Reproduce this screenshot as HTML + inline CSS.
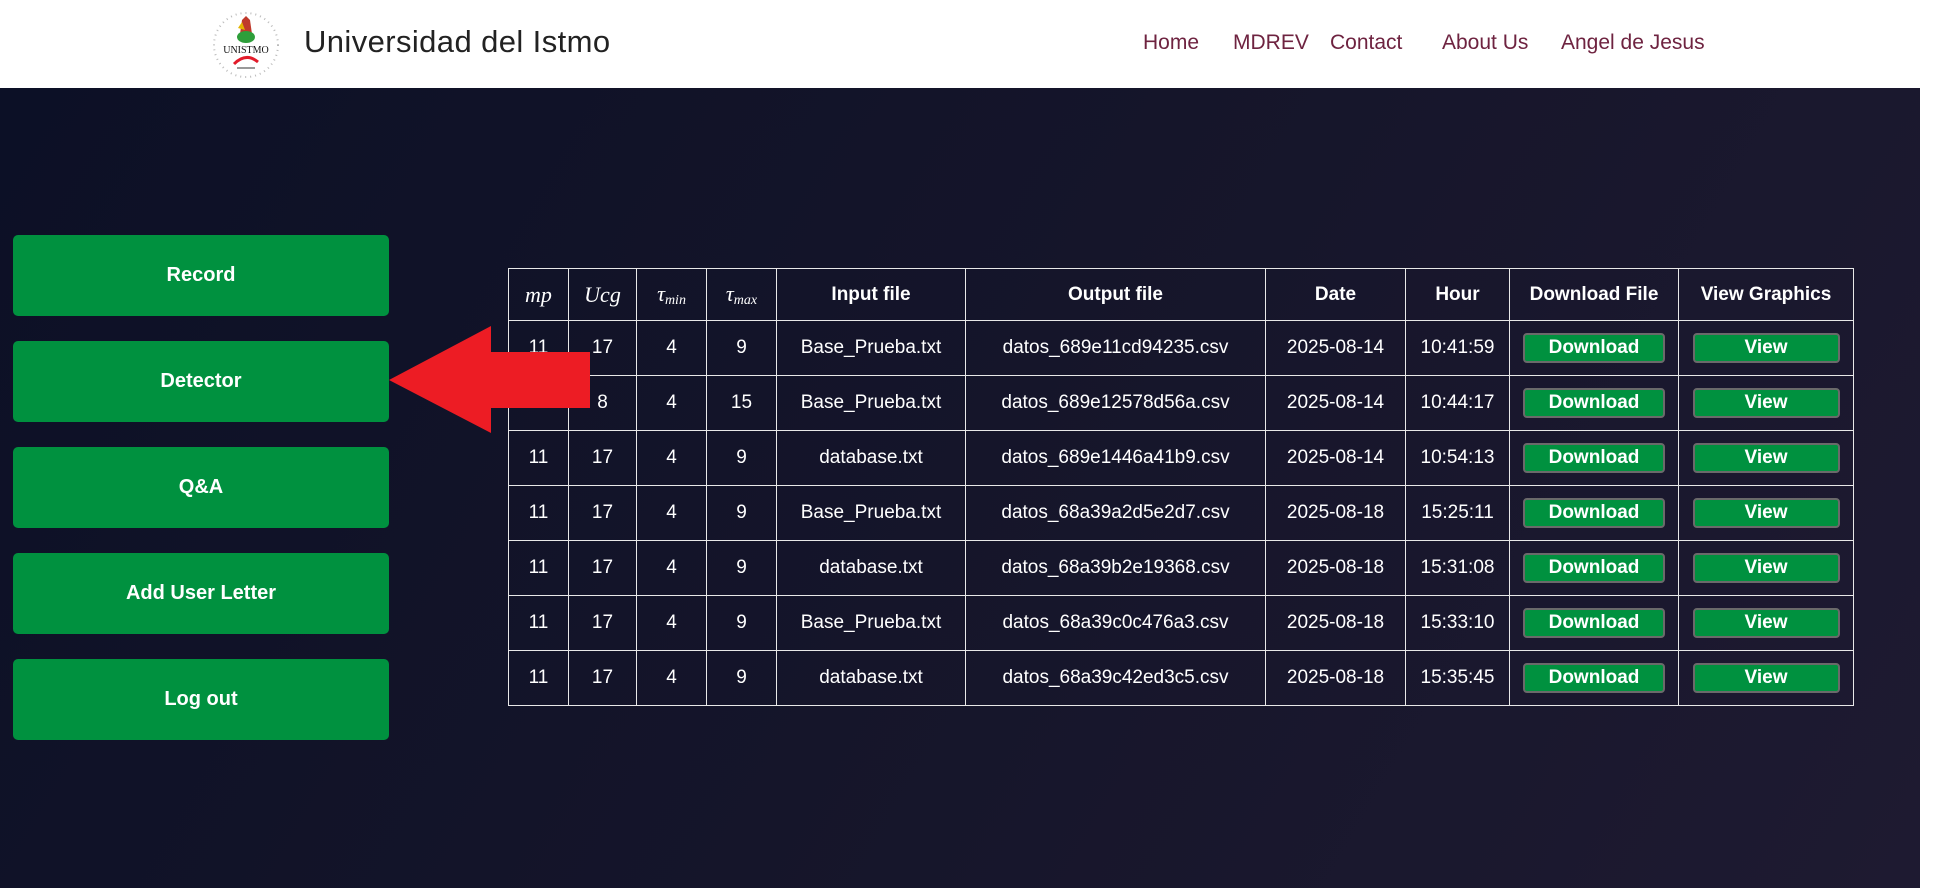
<!DOCTYPE html>
<html><head><meta charset="utf-8"><style>
*{margin:0;padding:0;box-sizing:border-box}
html,body{width:1957px;height:888px;overflow:hidden;background:#fff;font-family:"Liberation Sans",sans-serif}
#hdr{position:absolute;left:0;top:0;width:1920px;height:88px;background:#fff}
#main{position:absolute;left:0;top:88px;width:1920px;height:800px;background:linear-gradient(120deg,#0c1026 0%,#15152a 50%,#1e1a31 100%)}
.title{position:absolute;left:304px;top:24px;font-size:31px;color:#222;letter-spacing:0.4px}
.nav a{position:absolute;top:31px;font-size:21px;color:#6e2340;text-decoration:none}
.sb{position:absolute;left:13px;width:376px;height:81px;background:#00913f;border-radius:5px;color:#fff;font-weight:bold;font-size:20px;display:flex;align-items:center;justify-content:center}
table{position:absolute;left:508px;top:268px;border-collapse:collapse;color:#fff;font-size:19px;table-layout:fixed;width:1345px}
td,th{border:1px solid #e8e8e8;text-align:center;height:55px;padding:0;white-space:nowrap}
th{height:52px;font-size:19px}
.m{font-family:"Liberation Serif",serif;font-style:italic;font-weight:normal;font-size:22px}
.m sub{font-size:14px;vertical-align:-3px}
.b{display:inline-block;background:#00913f;border:2px solid #6a6a6a;border-radius:4px;color:#fff;font-weight:bold;font-size:19px;height:30px;line-height:26px}
.d{width:142px}.v{width:147px}
</style></head><body>
<div id="hdr">
<svg style="position:absolute;left:210px;top:10px" width="72" height="70" viewBox="0 0 72 70">
<circle cx="36" cy="35" r="32" fill="none" stroke="#bbb" stroke-dasharray="1 4" stroke-width="2"/>
<path d="M32 10 L36 6 L40 10 L42 24 L30 24Z" fill="#c0392b"/>
<ellipse cx="36" cy="27" rx="9" ry="6" fill="#2e9e3a"/>
<path d="M28 18 L32 12 L35 20Z" fill="#e4b400"/>
<text x="36" y="43" font-family="Liberation Serif" font-size="10" text-anchor="middle" fill="#111">UNISTMO</text>
<path d="M24 54 Q36 42 48 52" stroke="#e21b2a" stroke-width="3" fill="none"/>
<rect x="27" y="57" width="18" height="2" fill="#999"/>
</svg>
<div class="title">Universidad del Istmo</div>
<div class="nav">
<a style="left:1143px">Home</a><a style="left:1233px">MDREV</a><a style="left:1330px">Contact</a><a style="left:1442px">About Us</a><a style="left:1561px">Angel de Jesus</a>
</div>
</div>
<div id="main"></div>
<div class="sb" style="top:235px">Record</div>
<div class="sb" style="top:341px">Detector</div>
<div class="sb" style="top:447px">Q&amp;A</div>
<div class="sb" style="top:553px">Add User Letter</div>
<div class="sb" style="top:659px">Log out</div>
<table>
<colgroup><col style="width:60px"><col style="width:68px"><col style="width:70px"><col style="width:70px"><col style="width:189px"><col style="width:300px"><col style="width:140px"><col style="width:104px"><col style="width:169px"><col style="width:175px"></colgroup>
<tr><th class="m">mp</th><th class="m">Ucg</th><th class="m">τ<sub>min</sub></th><th class="m">τ<sub>max</sub></th><th>Input file</th><th>Output file</th><th>Date</th><th>Hour</th><th>Download File</th><th>View Graphics</th></tr>
<tr><td>11</td><td>17</td><td>4</td><td>9</td><td>Base_Prueba.txt</td><td>datos_689e11cd94235.csv</td><td>2025-08-14</td><td>10:41:59</td><td><span class="b d">Download</span></td><td><span class="b v">View</span></td></tr>
<tr><td>11</td><td>8</td><td>4</td><td>15</td><td>Base_Prueba.txt</td><td>datos_689e12578d56a.csv</td><td>2025-08-14</td><td>10:44:17</td><td><span class="b d">Download</span></td><td><span class="b v">View</span></td></tr>
<tr><td>11</td><td>17</td><td>4</td><td>9</td><td>database.txt</td><td>datos_689e1446a41b9.csv</td><td>2025-08-14</td><td>10:54:13</td><td><span class="b d">Download</span></td><td><span class="b v">View</span></td></tr>
<tr><td>11</td><td>17</td><td>4</td><td>9</td><td>Base_Prueba.txt</td><td>datos_68a39a2d5e2d7.csv</td><td>2025-08-18</td><td>15:25:11</td><td><span class="b d">Download</span></td><td><span class="b v">View</span></td></tr>
<tr><td>11</td><td>17</td><td>4</td><td>9</td><td>database.txt</td><td>datos_68a39b2e19368.csv</td><td>2025-08-18</td><td>15:31:08</td><td><span class="b d">Download</span></td><td><span class="b v">View</span></td></tr>
<tr><td>11</td><td>17</td><td>4</td><td>9</td><td>Base_Prueba.txt</td><td>datos_68a39c0c476a3.csv</td><td>2025-08-18</td><td>15:33:10</td><td><span class="b d">Download</span></td><td><span class="b v">View</span></td></tr>
<tr><td>11</td><td>17</td><td>4</td><td>9</td><td>database.txt</td><td>datos_68a39c42ed3c5.csv</td><td>2025-08-18</td><td>15:35:45</td><td><span class="b d">Download</span></td><td><span class="b v">View</span></td></tr>
</table>
<svg style="position:absolute;left:0;top:0" width="1957" height="888"><polygon points="389,380 491,326 491,352 590,352 590,408 491,408 491,433" fill="#ed1c24"/></svg>
</body></html>
